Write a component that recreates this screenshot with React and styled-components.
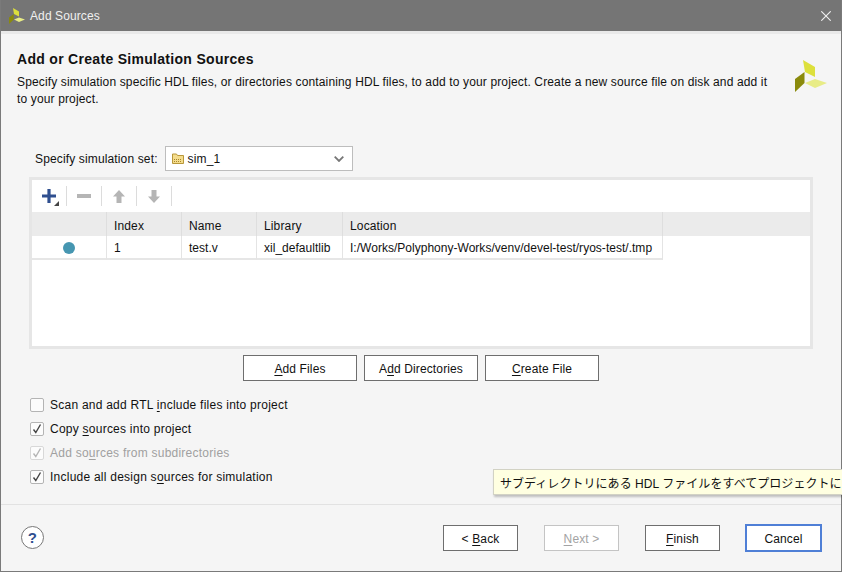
import React from 'react';
import styled, {createGlobalStyle} from 'styled-components';

const Global = createGlobalStyle`
  html, body { margin: 0; padding: 0; }
  body { font-family: "Liberation Sans", Arial, sans-serif; font-size: 12px; letter-spacing: 0.14px; color: #111; overflow: hidden; }
`
const Window = styled.div`
  position: relative;
  box-sizing: border-box;
  width: 842px;
  height: 572px;
  display: flex;
  flex-direction: column;
  background: #f5f5f5;
  border: 1px solid #7a7a7a;
  border-top: 0;
`
const TitleBar = styled.div`
  flex: none;
  height: 31px;
  display: flex;
  align-items: center;
  padding: 0 10px 0 8px;
  gap: 5px;
  background: #757575;
  color: #f0f0f0;
  font-size: 12px;
  letter-spacing: 0.1px;
  border-bottom: 3px solid #e9e9e9;
`
const TitleText = styled.span`
  flex: 1;
`
const Main = styled.div`
  flex: 1;
  display: flex;
  flex-direction: column;
  padding: 17px 28px 0 16px;
`
const Header = styled.div`
  display: flex;
  align-items: flex-start;
  justify-content: space-between;
`
const Heading = styled.h1`
  margin: 0 0 7px;
  font-size: 14px;
  line-height: 16px;
  font-weight: bold;
  letter-spacing: 0.3px;
`
const Description = styled.p`
  margin: 0;
  width: 760px;
  font-size: 12px;
  line-height: 17px;
`
const LogoWrap = styled.div`
  flex: none;
  display: flex;
  margin: 9px -14px 0 0;
`
const SetRow = styled.div`
  display: flex;
  align-items: center;
  gap: 7px;
  margin: 38px 0 6px 18px;
`
const Select = styled.div`
  box-sizing: border-box;
  width: 188px;
  height: 25px;
  display: flex;
  align-items: center;
  gap: 4px;
  padding: 0 8px 0 6px;
  background: #fff;
  border: 1px solid #bdbdbd;
`
const SelectText = styled.span`
  flex: 1;
`
const TablePanel = styled.div`
  box-sizing: border-box;
  width: 784px;
  height: 172px;
  margin-left: 12px;
  background: #fff;
  border: 3px solid #e6e6e6;
`
const Toolbar = styled.div`
  height: 32px;
  display: flex;
  align-items: center;
`
const ToolButton = styled.div`
  box-sizing: border-box;
  width: 35px;
  height: 20px;
  position: relative;
  display: flex;
  align-items: center;
  justify-content: center;
  border-right: 1px solid #dcdcdc;
`
const Corner = styled.i`
  position: absolute;
  right: 7px;
  bottom: 0;
  border-left: 5px solid transparent;
  border-bottom: 5px solid #444;
`
const Grid = styled.div`
  display: grid;
  grid-template-columns: 75px 75px 75px 86px 320px 1fr;
`
const HeadCell = styled.div`
  box-sizing: border-box;
  height: 24px;
  padding: 3px 0 0 7px;
  display: flex;
  align-items: center;
  background: #ebebeb;
  border-right: ${p => p.$last ? 0 : '1px solid #dedede'};
`
const Cell = styled.div`
  box-sizing: border-box;
  height: 24px;
  padding: 1px 0 0 7px;
  display: flex;
  align-items: center;
  justify-content: ${p => p.$center ? 'center' : 'flex-start'};
  letter-spacing: 0.02px;
  border-right: 1px solid #e4e4e4;
  border-bottom: 2px solid #e6e6e6;
`
const Dot = styled.span`
  width: 12px;
  height: 12px;
  margin-left: -7px;
  border-radius: 50%;
  background: #4696b1;
`
const ButtonRow = styled.div`
  display: flex;
  gap: 7px;
  margin: 6px 0 0 226px;
`
const Button = styled.button`
  box-sizing: border-box;
  width: ${p => p.$wide ? 114 : 75}px;
  height: 26px;
  padding: 1px 0 0;
  font: 12px "Liberation Sans", Arial, sans-serif;
  letter-spacing: 0.13px;
  background: #fff;
  color: ${p => p.disabled ? '#a3a3a3' : '#111'};
  border: 1px solid ${p => p.disabled ? '#c4c4c4' : '#6e6e6e'};
  ${p => p.$focus && `
    width: 77px;
    height: 28px;
    margin-left: -1px;
    border: 2px solid #4f7fd6;
  `}
`
const Checks = styled.div`
  display: flex;
  flex-direction: column;
  gap: 8px;
  margin: 16px 0 0 13px;
  letter-spacing: 0.24px;
`
const CheckRow = styled.label`
  height: 16px;
  display: flex;
  align-items: center;
  gap: 6px;
  color: ${p => p.$off ? '#a0a0a0' : '#111'};
`
const Box = styled.span`
  box-sizing: border-box;
  width: 14px;
  height: 14px;
  margin-bottom: 1px;
  display: flex;
  align-items: center;
  justify-content: center;
  background: #fcfcfc;
  border: 1px solid ${p => p.$off ? '#d8d8d8' : '#b4b4b4'};
  border-radius: 2px;
`
const Footer = styled.div`
  flex: none;
  height: 66px;
  display: flex;
  align-items: center;
  padding: 0 19px 0 20px;
  border-top: 1px solid #e2e2e2;
`
const Help = styled.div`
  box-sizing: border-box;
  width: 23px;
  height: 23px;
  display: flex;
  align-items: center;
  justify-content: center;
  margin: 0 auto 1px 0;
  border: 1px solid #777;
  border-radius: 50%;
  background: #fff;
  color: #2f4f8f;
  font-size: 15px;
  font-weight: bold;
`
const FooterButtons = styled.div`
  display: flex;
  align-items: center;
  gap: 26px;
`
const Tooltip = styled.div`
  position: absolute;
  left: 492px;
  top: 469px;
  box-sizing: border-box;
  width: 360px;
  height: 26px;
  padding-left: 6px;
  display: flex;
  align-items: center;
  white-space: nowrap;
  font-family: "Liberation Sans", "Noto Sans CJK JP", sans-serif;
  font-size: 12px;
  letter-spacing: 0.05px;
  background: #ffffe1;
  border: 1px solid #d2d2c4;
  box-shadow: 1px 2px 2px rgba(0,0,0,.22);
`
const U = styled.u`
  text-underline-offset: 2px;
`

function XilinxLogo({size}) {
  return (
    <svg width={size} height={size} viewBox="0 0 32 32">
      <polygon points="8,0 20,7 20,17 10,12" fill="#dde03c" />
      <polygon points="10,23 20,19 32,23 20,28" fill="#e8ec86" />
      <polygon points="9.5,12 9.5,23 0,32 0,19" fill="#8a8a0c" />
    </svg>
  )
}

function Check({off}) {
  return (
    <svg width="12" height="12" viewBox="0 0 12 12">
      <path d="M2.5 6.5 L4.8 9.5 L9.5 1.5" fill="none" stroke={off ? '#b5b5b5' : '#444'} strokeWidth="1.4" />
    </svg>
  )
}

function CheckItem({checked, off, children}) {
  return (
    <CheckRow $off={off}>
      <Box $off={off}>{checked && <Check off={off} />}</Box>
      <span>{children}</span>
    </CheckRow>
  )
}

export default function App() {
  return (
    <Window>
      <Global />
      <TitleBar>
        <XilinxLogo size={16} />
        <TitleText>Add Sources</TitleText>
        <svg width="10" height="10" viewBox="0 0 10 10">
          <path d="M0.3 0.3 L9.7 9.7 M9.7 0.3 L0.3 9.7" stroke="#f0f0f0" strokeWidth="1.1" />
        </svg>
      </TitleBar>
      <Main>
        <Header>
          <div>
            <Heading>Add or Create Simulation Sources</Heading>
            <Description>
              Specify simulation specific HDL files, or directories containing HDL files, to add to your project. Create a new source file on disk and add it to your project.
            </Description>
          </div>
          <LogoWrap><XilinxLogo size={32} /></LogoWrap>
        </Header>
        <SetRow>
          <span>Specify simulation set:</span>
          <Select>
            <svg width="12" height="11" viewBox="0 0 12 11">
              <path d="M0.5 1 H4.5 L5.5 2.5 H11.5 V10.5 H0.5 Z" fill="#f4dc8c" stroke="#b8973a" />
              <path d="M2 6.5 H10 M2 8.5 H10" stroke="#a8862c" strokeDasharray="1 1" />
            </svg>
            <SelectText>sim_1</SelectText>
            <svg width="10" height="6" viewBox="0 0 10 6">
              <path d="M0.7 0.7 L5 5 L9.3 0.7" fill="none" stroke="#777" strokeWidth="1.8" />
            </svg>
          </Select>
        </SetRow>
        <TablePanel>
          <Toolbar>
            <ToolButton>
              <svg width="14" height="14" viewBox="0 0 14 14">
                <path d="M7 0 V14 M0 7 H14" stroke="#2f4f8f" strokeWidth="3.2" />
              </svg>
              <Corner />
            </ToolButton>
            <ToolButton>
              <svg width="14" height="14" viewBox="0 0 14 14">
                <path d="M0 7 H14" stroke="#b5b5b5" strokeWidth="4" />
              </svg>
            </ToolButton>
            <ToolButton>
              <svg width="12" height="13" viewBox="0 0 12 13">
                <path d="M6 0 L12 6.5 H8.5 V13 H3.5 V6.5 H0 Z" fill="#b5b5b5" />
              </svg>
            </ToolButton>
            <ToolButton>
              <svg width="12" height="13" viewBox="0 0 12 13">
                <path d="M6 13 L12 6.5 H8.5 V0 H3.5 V6.5 H0 Z" fill="#b5b5b5" />
              </svg>
            </ToolButton>
          </Toolbar>
          <Grid>
            <HeadCell />
            <HeadCell>Index</HeadCell>
            <HeadCell>Name</HeadCell>
            <HeadCell>Library</HeadCell>
            <HeadCell>Location</HeadCell>
            <HeadCell $last />
            <Cell $center><Dot /></Cell>
            <Cell>1</Cell>
            <Cell>test.v</Cell>
            <Cell>xil_defaultlib</Cell>
            <Cell>I:/Works/Polyphony-Works/venv/devel-test/ryos-test/.tmp</Cell>
          </Grid>
        </TablePanel>
        <ButtonRow>
          <Button $wide><U>A</U>dd Files</Button>
          <Button $wide>A<U>d</U>d Directories</Button>
          <Button $wide><U>C</U>reate File</Button>
        </ButtonRow>
        <Checks>
          <CheckItem>Scan and add RTL <U>i</U>nclude files into project</CheckItem>
          <CheckItem checked>Copy <U>s</U>ources into project</CheckItem>
          <CheckItem checked off>Add so<U>u</U>rces from subdirectories</CheckItem>
          <CheckItem checked>Include all design s<U>o</U>urces for simulation</CheckItem>
        </Checks>
      </Main>
      <Footer>
        <Help>?</Help>
        <FooterButtons>
          <Button>&lt; <U>B</U>ack</Button>
          <Button disabled><U>N</U>ext &gt;</Button>
          <Button><U>F</U>inish</Button>
          <Button $focus>Cancel</Button>
        </FooterButtons>
      </Footer>
      <Tooltip>サブディレクトリにある HDL ファイルをすべてプロジェクトに</Tooltip>
    </Window>
  )
}
